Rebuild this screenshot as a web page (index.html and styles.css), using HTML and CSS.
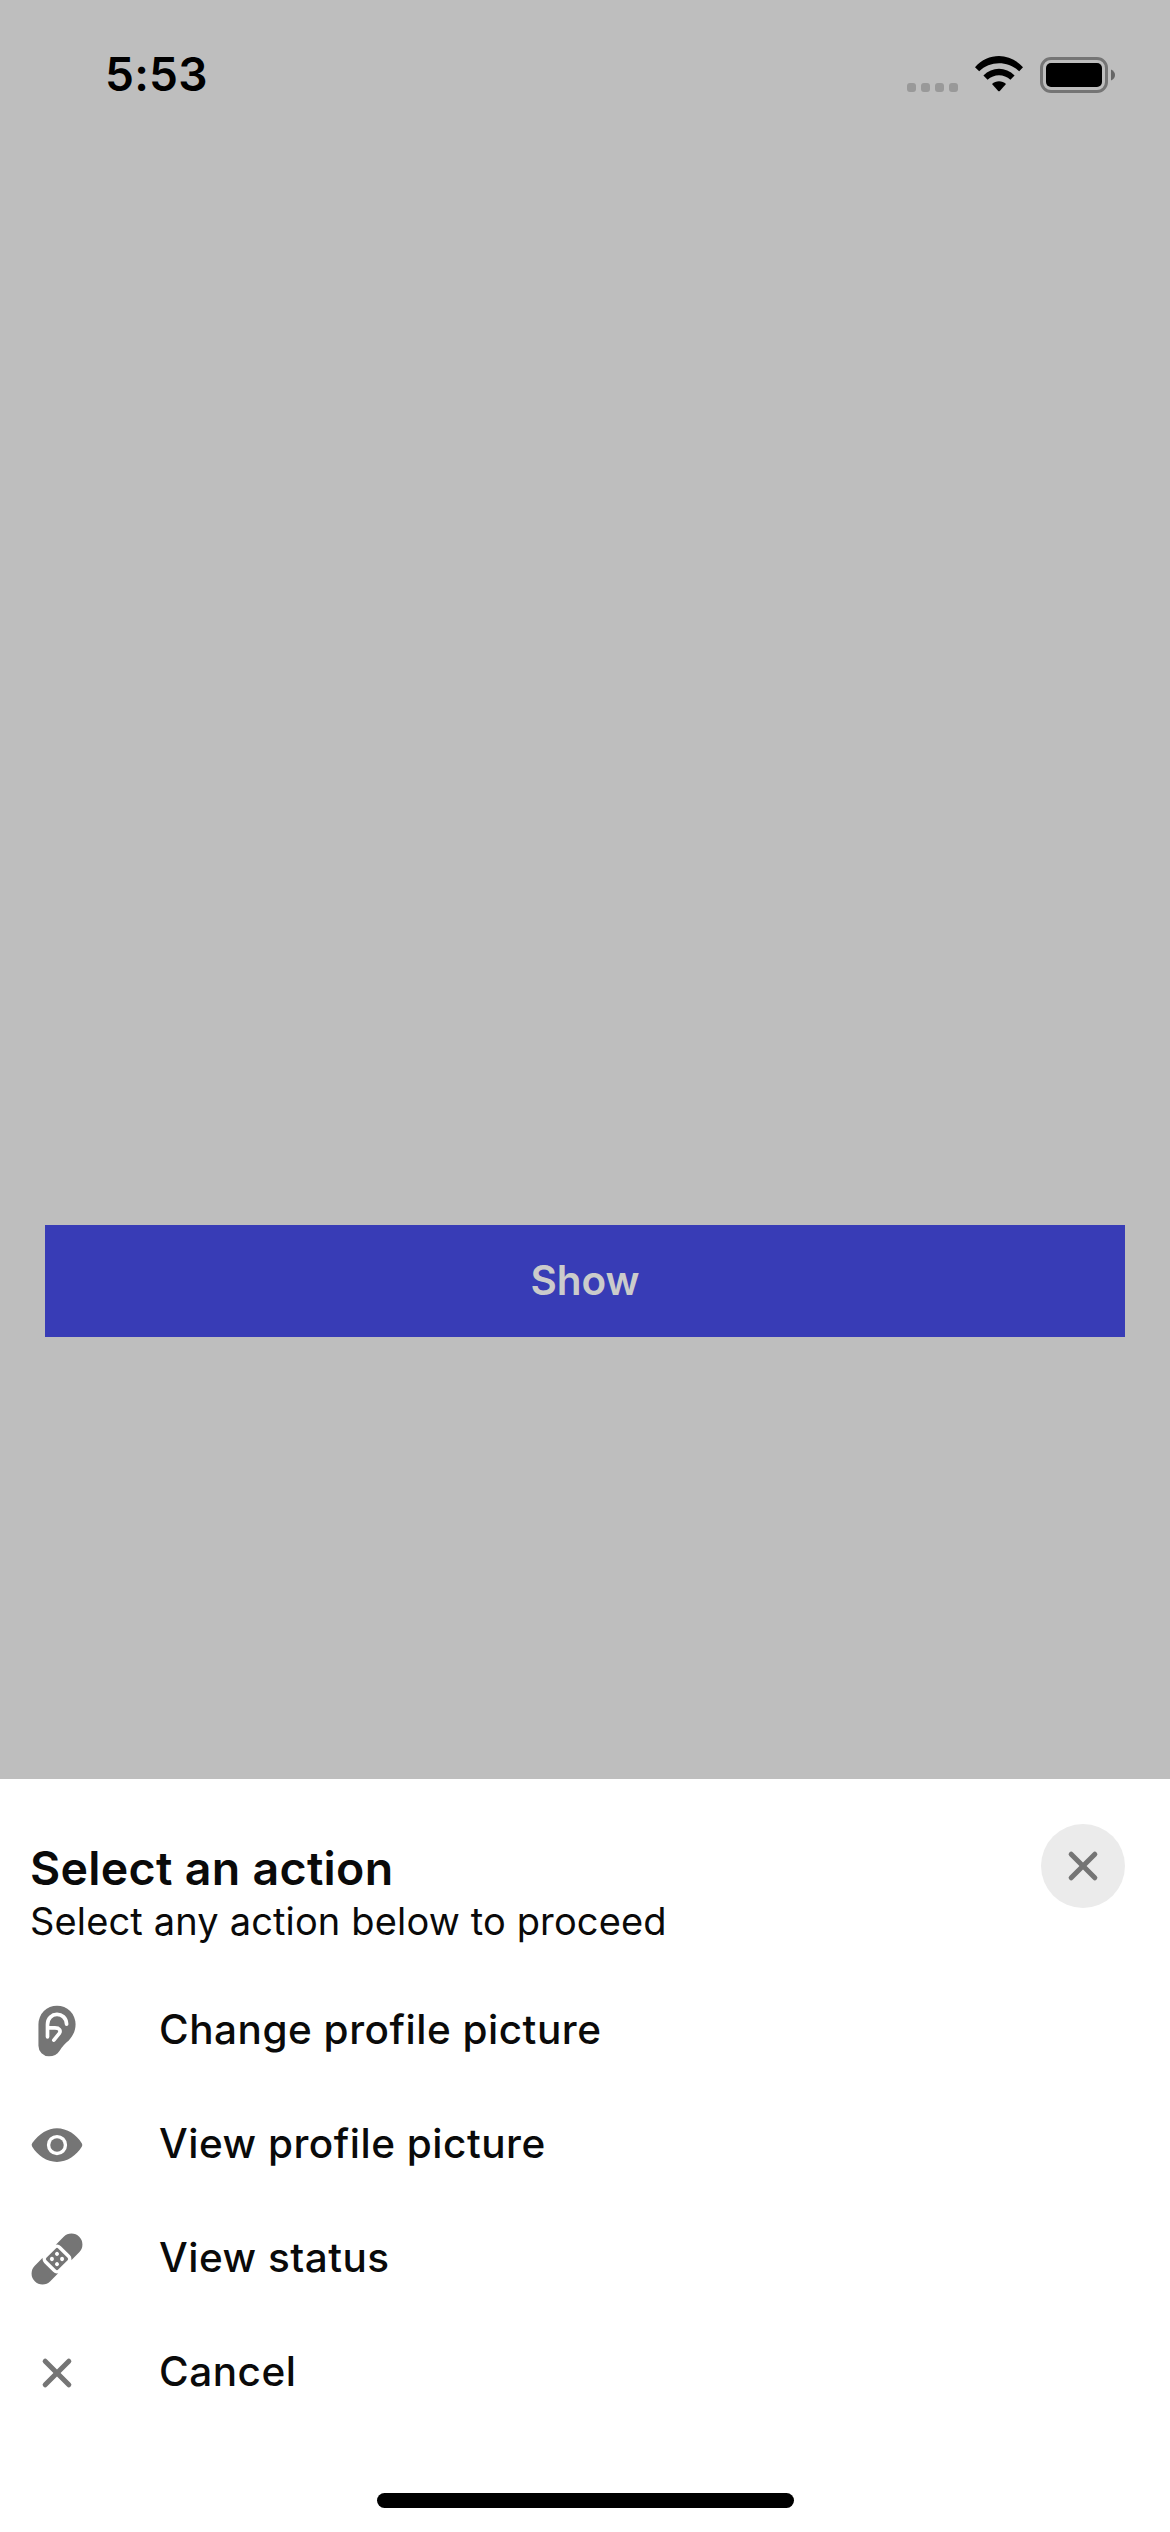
FILE: index.html
```
<!DOCTYPE html>
<html lang="en">
<head>
<meta charset="utf-8">
<title>Select an action</title>
<link rel="stylesheet" href="styles.css">
</head>
<body>
<div class="screen">
  <header class="status-bar">
    <span class="time">5:53</span>
    <div class="indicators">
      <div class="cellular"><i></i><i></i><i></i><i></i></div>
      <svg class="wifi" viewBox="0 0 48 36" aria-hidden="true">
        <path d="M0 11.2C13.2-3.7 34.8-3.7 48 11.2L44.2 15.3C33.2 4.6 14.8 4.6 4.2 15.3Z"/>
        <path d="M8.4 19.5C17.2 10.5 30.8 10.5 39.6 19.5L35.4 23.7C29 17.6 19 17.6 12.6 23.7Z"/>
        <path d="M17 28C20.8 24.2 27.2 24.2 31 28L24.8 34.9Q24 35.7 23.2 34.9Z"/>
      </svg>
      <svg class="battery" viewBox="0 0 76 36" aria-hidden="true">
        <rect class="battery-frame" x="1.5" y="1.5" width="65" height="33" rx="9.5"/>
        <rect x="6" y="6" width="56" height="24" rx="5"/>
        <path class="battery-cap" d="M71 12.5Q75 14.5 75 18T71 23.5Z"/>
      </svg>
    </div>
  </header>
  <main class="content">
    <button class="show">Show</button>
  </main>
  <section class="sheet">
    <div class="sheet-header">
      <div>
        <h1 class="title">Select an action</h1>
        <p class="subtitle">Select any action below to proceed</p>
      </div>
      <button class="close" aria-label="Close">
        <svg class="icon" viewBox="0 0 512 512"><path d="M289.94 256l95-95A24 24 0 00351 127l-95 95-95-95a24 24 0 00-34 34l95 95-95 95a24 24 0 1034 34l95-95 95 95a24 24 0 0034-34z"/></svg>
      </button>
    </div>
    <ul class="actions">
      <li class="action">
        <svg class="icon" viewBox="0 0 512 512">
          <path d="M80 192A176 176 0 0 1 432 192C432 262 402 304 368 346C338 372 304 400 281 444C258 480 225 496 180 496A100 100 0 0 1 80 396Z"/>
          <path class="ear-line" d="M166 311V195C166 70 342 65 347 191M166 226H237C277 226 297 250 276 281L226 342"/>
        </svg>
        <span>Change profile picture</span>
      </li>
      <li class="action">
        <svg class="icon" viewBox="0 0 512 512"><circle cx="256" cy="256" r="64"/><path d="M490.84 238.6c-26.46-40.92-60.79-75.68-99.27-100.53C349 110.55 302 96 255.66 96c-42.52 0-84.33 12.15-124.27 36.11-40.73 24.43-77.63 60.12-109.68 106.07a31.92 31.92 0 00-.64 35.54c26.41 41.33 60.4 76.14 98.28 100.65C162 402 207.9 416 255.66 416c46.71 0 93.81-14.43 136.2-41.72 38.46-24.77 72.72-59.66 99.08-100.92a32.2 32.2 0 00-.1-34.76zM256 352a96 96 0 1196-96 96.11 96.11 0 01-96 96z"/></svg>
        <span>View profile picture</span>
      </li>
      <li class="action">
        <svg class="icon" viewBox="0 0 512 512">
          <g transform="translate(256 256) rotate(-45)">
            <path d="M88-104H194A104 104 0 0 1 194 104H88Q112 88 112 60V-60Q112-88 88-104Z"/>
            <path d="M-88-104H-194A104 104 0 0 0-194 104H-88Q-112 88-112 60V-60Q-112-88-88-104Z"/>
            <rect x="-79" y="-79" width="158" height="158" rx="16"/>
            <g class="holes"><circle cx="-34" cy="-34" r="19"/><circle cx="34" cy="-34" r="19"/><circle cx="-34" cy="34" r="19"/><circle cx="34" cy="34" r="19"/></g>
          </g>
        </svg>
        <span>View status</span>
      </li>
      <li class="action">
        <svg class="icon" viewBox="0 0 512 512"><path d="M289.94 256l95-95A24 24 0 00351 127l-95 95-95-95a24 24 0 00-34 34l95 95-95 95a24 24 0 1034 34l95-95 95 95a24 24 0 0034-34z"/></svg>
        <span>Cancel</span>
      </li>
    </ul>
    <div class="home-indicator"></div>
  </section>
</div>
</body>
</html>
```
FILE: styles.css
```
* { box-sizing: border-box; }
body { margin: 0; font-family: Inter, sans-serif; color: #0a0a0a; }
h1, p, ul { margin: 0; padding: 0; }
button { border: 0; padding: 0; font-family: inherit; }

.screen {
  display: flex;
  flex-direction: column;
  width: 1170px;
  height: 2532px;
  overflow: hidden;
  background: #bebebe;
}

.status-bar {
  display: flex;
  justify-content: space-between;
  align-items: flex-start;
  height: 141px;
  padding: 46px 54px 0 105px;
}
.time {
  color: #000;
  font-size: 46px;
  font-weight: 600;
  line-height: 56px;
  letter-spacing: 0.2px;
}
.indicators { display: flex; align-items: flex-end; padding-top: 10px; }
.cellular { display: flex; gap: 5px; margin: 0 17px 1px 0; }
.cellular i { width: 9px; height: 9px; border-radius: 3px; background: #999; }
.wifi { width: 48px; height: 36px; margin: 0 17px 1px 0; }
.battery { width: 76px; height: 36px; }
.battery-frame { fill: none; stroke: #757575; stroke-width: 3; }
.battery-cap { fill: #666; }

.content { flex: 1; padding: 1084px 45px 0; }
.show {
  display: block;
  width: 100%;
  height: 112px;
  padding-bottom: 2px;
  background: #383cb6;
  color: #cbcbcb;
  font-size: 40.5px;
  font-weight: 600;
}

.sheet {
  display: flex;
  flex-direction: column;
  height: 753px;
  padding: 45px 45px 24px 30px;
  background: #fff;
}
.sheet-header { display: flex; justify-content: space-between; height: 150px; }
.title {
  margin-top: 16px;
  font-size: 46.5px;
  font-weight: 600;
  line-height: 56px;
  letter-spacing: 0.3px;
}
.subtitle {
  margin-top: 2px;
  font-size: 38px;
  line-height: 46px;
  letter-spacing: 0.15px;
}
.close {
  display: flex;
  align-items: center;
  justify-content: center;
  width: 84px;
  height: 84px;
  border-radius: 50%;
  background: #ebebeb;
}
.icon { width: 54px; height: 54px; fill: #757575; flex: none; }
.ear-line { fill: none; stroke: #fff; stroke-width: 35; stroke-linecap: round; stroke-linejoin: round; }
.holes { fill: #fff; }

.actions { list-style: none; }
.action { display: flex; align-items: center; gap: 75px; height: 114px; }
.action span {
  padding-bottom: 3px;
  font-size: 40.5px;
  font-weight: 500;
  line-height: 49px;
  letter-spacing: 0.5px;
}

.home-indicator {
  align-self: center;
  width: 417px;
  height: 15px;
  margin: auto 0 0 15px;
  border-radius: 8px;
  background: #000;
}
```
